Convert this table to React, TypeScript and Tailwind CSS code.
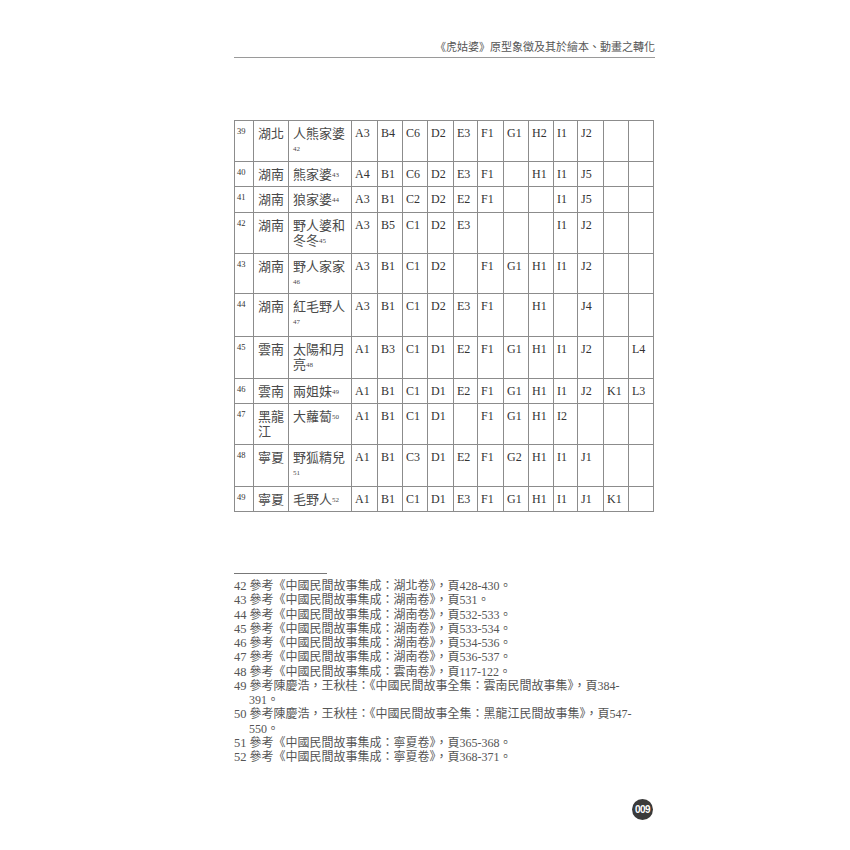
const ROWS: { no: number; prov: string; title: string; note: string; h: string; codes: string[] }[] = [
  { no: 39, prov: "湖北", title: "人熊家婆", note: "42", h: "h-[41px]", codes: ["A3", "B4", "C6", "D2", "E3", "F1", "G1", "H2", "I1", "J2", "", ""] },
  { no: 40, prov: "湖南", title: "熊家婆", note: "43", h: "h-[25px]", codes: ["A4", "B1", "C6", "D2", "E3", "F1", "", "H1", "I1", "J5", "", ""] },
  { no: 41, prov: "湖南", title: "狼家婆", note: "44", h: "h-[26px]", codes: ["A3", "B1", "C2", "D2", "E2", "F1", "", "", "I1", "J5", "", ""] },
  { no: 42, prov: "湖南", title: "野人婆和冬冬", note: "45", h: "h-[41px]", codes: ["A3", "B5", "C1", "D2", "E3", "", "", "", "I1", "J2", "", ""] },
  { no: 43, prov: "湖南", title: "野人家家", note: "46", h: "h-[40px]", codes: ["A3", "B1", "C1", "D2", "", "F1", "G1", "H1", "I1", "J2", "", ""] },
  { no: 44, prov: "湖南", title: "紅毛野人", note: "47", h: "h-[43px]", codes: ["A3", "B1", "C1", "D2", "E3", "F1", "", "H1", "", "J4", "", ""] },
  { no: 45, prov: "雲南", title: "太陽和月亮", note: "48", h: "h-[42px]", codes: ["A1", "B3", "C1", "D1", "E2", "F1", "G1", "H1", "I1", "J2", "", "L4"] },
  { no: 46, prov: "雲南", title: "兩姐妹", note: "49", h: "h-[25px]", codes: ["A1", "B1", "C1", "D1", "E2", "F1", "G1", "H1", "I1", "J2", "K1", "L3"] },
  { no: 47, prov: "黑龍江", title: "大蘿蔔", note: "50", h: "h-[41px]", codes: ["A1", "B1", "C1", "D1", "", "F1", "G1", "H1", "I2", "", "", ""] },
  { no: 48, prov: "寧夏", title: "野狐精兒", note: "51", h: "h-[42px]", codes: ["A1", "B1", "C3", "D1", "E2", "F1", "G2", "H1", "I1", "J1", "", ""] },
  { no: 49, prov: "寧夏", title: "毛野人", note: "52", h: "h-[25px]", codes: ["A1", "B1", "C1", "D1", "E3", "F1", "G1", "H1", "I1", "J1", "K1", ""] },
];

// column widths in px: no, province, title, then A..L
const COLS = ["w-[19px]", "w-[35px]", "w-[63px]", "w-[26px]", "w-[25px]", "w-[25px]", "w-[26px]", "w-[24px]", "w-[26px]", "w-[25px]", "w-[25px]", "w-[24px]", "w-[26px]", "w-[25px]", "w-[25px]"];

const NOTES: { n: string; text: string; cont?: string }[] = [
  { n: "42", text: "參考《中國民間故事集成：湖北卷》，頁428-430。" },
  { n: "43", text: "參考《中國民間故事集成：湖南卷》，頁531。" },
  { n: "44", text: "參考《中國民間故事集成：湖南卷》，頁532-533。" },
  { n: "45", text: "參考《中國民間故事集成：湖南卷》，頁533-534。" },
  { n: "46", text: "參考《中國民間故事集成：湖南卷》，頁534-536。" },
  { n: "47", text: "參考《中國民間故事集成：湖南卷》，頁536-537。" },
  { n: "48", text: "參考《中國民間故事集成：雲南卷》，頁117-122。" },
  { n: "49", text: "參考陳慶浩，王秋桂：《中國民間故事全集：雲南民間故事集》，頁384-", cont: "391。" },
  { n: "50", text: "參考陳慶浩，王秋桂：《中國民間故事全集：黑龍江民間故事集》，頁547-", cont: "550。" },
  { n: "51", text: "參考《中國民間故事集成：寧夏卷》，頁365-368。" },
  { n: "52", text: "參考《中國民間故事集成：寧夏卷》，頁368-371。" },
];

const FONT = "font-['Liberation_Serif','Noto_Sans_CJK_TC',serif]";

export default function App() {
  return (
    <div className={`w-[850px] h-[850px] bg-white overflow-hidden ${FONT}`}>
      <div className="ml-[234px] w-[421px] flex flex-col">
        {/* running header */}
        <div className="pt-[39px] pb-[2px] border-b border-[#9a9a9a] text-right text-[11px] leading-[16px] text-[#555]">
          《虎姑婆》原型象徵及其於繪本、動畫之轉化
        </div>

        {/* table */}
        <table className="mt-[62px] w-[419px] table-fixed border-collapse text-[#333]">
          <colgroup>
            {COLS.map((c, i) => (
              <col key={i} className={c} />
            ))}
          </colgroup>
          <tbody>
            {ROWS.map((r) => (
              <tr key={r.no} className={r.h}>
                <td className="border border-[#8c8c8c] align-top pl-[2px] pt-[5px] text-[8.5px] leading-[10px] text-[#333]">{r.no}</td>
                <td className="border border-[#8c8c8c] align-top pl-[4px] pt-[5px] text-[13px] leading-[15px] text-[#4a4a4a]">{r.prov}</td>
                <td className="border border-[#8c8c8c] align-top pl-[4px] pr-[2px] pt-[5px] text-[13px] leading-[15px] text-[#4a4a4a]">
                  {r.title}
                  <sup className="text-[7px] leading-none top-[-2px]">{r.note}</sup>
                </td>
                {r.codes.map((c, i) => (
                  <td key={i} className="border border-[#8c8c8c] align-top pl-[3px] pt-[5px] text-[12px] leading-[15px] whitespace-nowrap">
                    {c}
                  </td>
                ))}
              </tr>
            ))}
          </tbody>
        </table>

        {/* footnotes */}
        <div className="mt-[61px] w-[93px] border-t border-[#777]" />
        <div className="mt-[5px] text-[12px] leading-[14.25px] text-[#555]">
          {NOTES.map((f) => (
            <div key={f.n}>
              <div className="whitespace-nowrap">
                <span className="text-[12.5px]">{f.n}</span> {f.text}
              </div>
              {f.cont && <div className="pl-[15px]">{f.cont}</div>}
            </div>
          ))}
        </div>

        {/* page number */}
        <div className="mt-[35px] flex justify-end pr-[2px]">
          <div className="w-[21px] h-[21px] rounded-full bg-[#3a3a3a] flex items-center justify-center font-['Liberation_Sans',sans-serif] font-bold text-[10px] leading-none text-white tracking-[-0.5px]">
            009
          </div>
        </div>
      </div>
    </div>
  );
}
